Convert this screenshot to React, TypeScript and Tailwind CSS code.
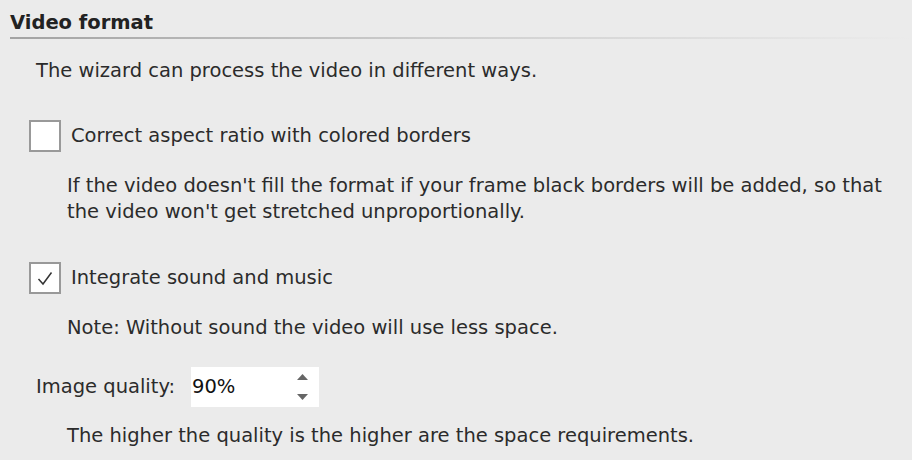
export default function App() {
  return (
    <div className="h-[460px] w-[912px] overflow-hidden bg-[#ebebeb] font-['DejaVu_Sans',sans-serif] text-[19.5px] text-[#2b2b2b]">
      <div className="pl-[10px] pt-[11px]">
        <h2 className="text-[19.5px] font-bold leading-[24px] text-[#222]">Video format</h2>
        <div className="mt-[2px] h-[2px] bg-gradient-to-r from-[#a3a3a3] via-[#d0d0d0] to-transparent" />
      </div>

      <p className="mt-[19px] pl-[36px] leading-[26px] whitespace-nowrap">
        The wizard can process the video in different ways.
      </p>

      <div className="mt-[36px] flex items-center gap-[10px] pl-[29px]">
        <span className="h-[32px] w-[32px] border-2 border-[#999] bg-white" />
        <span className="leading-[26px]">Correct aspect ratio with colored borders</span>
      </div>
      <p className="mt-[21px] pl-[67px] leading-[26px] whitespace-nowrap">
        If the video doesn't fill the format if your frame black borders will be added, so that
        <br />
        the video won't get stretched unproportionally.
      </p>

      <div className="mt-[37px] flex items-center gap-[10px] pl-[29px]">
        <span className="flex h-[32px] w-[32px] items-center justify-center border-2 border-[#999] bg-white">
          <svg width="16" height="15" viewBox="0 0 16 15">
            <path d="M1.5 8 L6 13 L14.5 1.5" fill="none" stroke="#333" strokeWidth="1.5" />
          </svg>
        </span>
        <span className="leading-[26px]">Integrate sound and music</span>
      </div>
      <p className="mt-[21px] pl-[67px] leading-[26px] whitespace-nowrap">
        Note: Without sound the video will use less space.
      </p>

      <div className="mt-[26px] flex items-center pl-[36px]">
        <span className="w-[155px] leading-[26px]">Image quality:</span>
        <div className="flex h-[40px] w-[128px] items-center justify-between bg-white pl-[1px] pr-[11px]">
          <span className="leading-[26px] text-[#111]">90%</span>
          <span className="flex flex-col gap-[14px]">
            <svg width="11" height="6" viewBox="0 0 11 6"><path d="M5.5 0 L11 6 L0 6 Z" fill="#666" /></svg>
            <svg width="11" height="6" viewBox="0 0 11 6"><path d="M0 0 L11 0 L5.5 6 Z" fill="#666" /></svg>
          </span>
        </div>
      </div>
      <p className="mt-[16px] pl-[67px] leading-[26px] whitespace-nowrap">
        The higher the quality is the higher are the space requirements.
      </p>
    </div>
  );
}
